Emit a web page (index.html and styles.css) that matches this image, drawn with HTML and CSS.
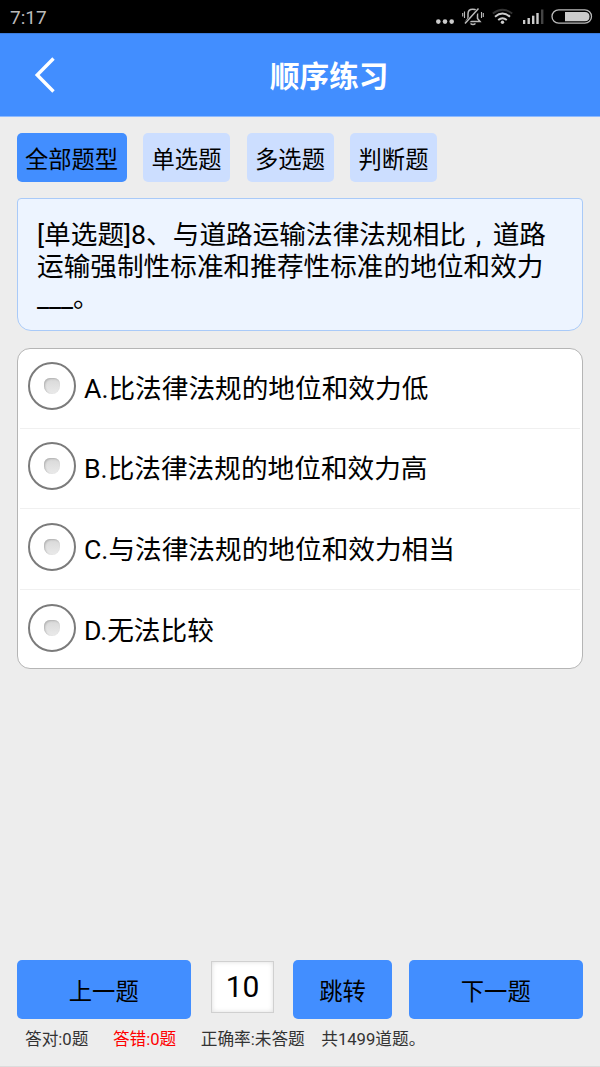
FILE: index.html
```html
<!DOCTYPE html>
<html lang="zh-CN">
<head>
  <meta charset="UTF-8" />
  <title>顺序练习</title>
  <link rel="stylesheet" href="styles.css">
</head>
<body>
  <div class="status-bar">
    <span class="time">7:17</span>
    <svg class="status-icons" width="160" height="33" viewBox="0 0 160 33">
      <!-- more -->
      <g fill="#ccc">
        <circle cx="3.3" cy="21.6" r="2.3" />
        <circle cx="10" cy="21.6" r="2.3" />
        <circle cx="16.7" cy="21.6" r="2.3" />
      </g>
      <!-- silent bell -->
      <g fill="none" stroke="#bbb" stroke-width="1.5">
        <path d="M31 21.5 L33 18.5 V14 Q33 9.3 37.7 9.3 Q42.5 9.3 42.5 14 V18.5 L45 21.5 Z" />
        <path d="M29.5 11.5 V18 M46.5 12 V18 M27.7 13 V16.5 M48.3 13 V17" stroke-width="1.1" />
        <path d="M35.5 23.5 Q38 25.5 40.5 23.5" />
        <path d="M30.5 24 L44 9" stroke="#000" stroke-width="4" />
        <path d="M30 23.5 L43.5 8.5" />
      </g>
      <!-- wifi -->
      <g fill="none" stroke="#ccc" stroke-width="1.9">
        <path d="M57.8 13.5 Q67.5 6 77.2 13.5" stroke="#333" />
        <path d="M60 16.7 Q67.5 10.3 75 16.7" />
        <path d="M63.2 20 Q67.5 16.3 71.8 20" />
        <circle cx="67.5" cy="22.3" r="1.7" fill="#ccc" stroke="none" />
      </g>
      <!-- signal -->
      <g fill="#ccc">
        <rect x="88" y="20" width="2.3" height="4" />
        <rect x="92.5" y="18" width="2.4" height="6" />
        <rect x="97" y="15.7" width="2.4" height="8.3" />
        <rect x="101.3" y="13" width="2.4" height="11" />
        <rect x="106" y="9.5" width="2.4" height="14.5" fill="#444" />
      </g>
      <rect x="117" y="9.8" width="39.5" height="13.4" rx="6.7" fill="none" stroke="#bbb" stroke-width="1.3" />
      <path d="M130 12 H150 Q154.5 12 154.5 16.5 Q154.5 21.3 150 21.3 H130 Z" fill="#ccc" />
    </svg>
  </div>

  <header>
    <svg class="back" width="24" height="40" viewBox="0 0 24 40">
      <path d="M19.5 3.5 L3.2 20 L19.5 36.5" fill="none" stroke="#fff" stroke-width="3.4" />
    </svg>
    <h1>顺序练习</h1>
  </header>

  <nav class="tabs">
    <button class="tab active">全部题型</button>
    <button class="tab">单选题</button>
    <button class="tab">多选题</button>
    <button class="tab">判断题</button>
  </nav>

  <div class="question">[单选题]8、与道路运输法律法规相比<span class="comma">,</span>道路<br>运输强制性标准和推荐性标准的地位和效力<br>___。</div>

  <div class="options">
    <div class="option"><span class="radio"></span>A.比法律法规的地位和效力低</div>
    <div class="option"><span class="radio"></span>B.比法律法规的地位和效力高</div>
    <div class="option"><span class="radio"></span>C.与法律法规的地位和效力相当</div>
    <div class="option"><span class="radio"></span>D.无法比较</div>
  </div>

  <footer>
    <div class="controls">
      <button class="btn step">上一题</button>
      <input type="text" class="page" value="10" />
      <button class="btn jump">跳转</button>
      <button class="btn step">下一题</button>
    </div>
    <div class="stats">
      <span class="right">答对:0题</span>
      <span class="wrong">答错:0题</span>
      <span class="rate">正确率:未答题</span>
      <span>共1499道题。</span>
    </div>
  </footer>
</body>
</html>
```
FILE: styles.css
```css
* {
  box-sizing: border-box;
}
body {
  font-family: Roboto, "Noto Sans CJK SC", sans-serif;
  background: #ededed;
  color: #000;
  margin: 0;
  height: 1067px;
  display: flex;
  flex-direction: column;
  overflow: hidden;
}
.status-bar {
  background: #000;
  height: 33px;
  display: flex;
  justify-content: space-between;
  padding: 0 5px 0 10px;
}
.time {
  color: #bbb;
  font-size: 19px;
  line-height: 35px;
}
header {
  background: #428eff;
  height: 84px;
  display: flex;
  align-items: center;
  border-top: 1px solid #3a7bdc;
  border-bottom: 1px solid #8dbaff;
}
.back {
  margin-left: 34px;
}
h1 {
  flex: 1;
  margin: 3px 0 0 212px;
  font-size: 29.6px;
  line-height: 40px;
  font-weight: 700;
  color: #fff;
}
button {
  font-family: inherit;
  font-size: 23.3px;
  border: none;
  padding: 0;
  color: #000;
  border-radius: 5px;
}
.tabs {
  display: flex;
  gap: 16.5px;
  margin: 16px 0 0 16.5px;
}
.tab {
  width: 87px;
  height: 49px;
  background: #ccdeff;
}
.tab.active {
  width: 110px;
  background: #428eff;
}
.question {
  margin: 16px 17px 0;
  height: 133px;
  padding: 21px 19px;
  background: #edf4ff;
  border: 1.5px solid #a9caf8;
  border-radius: 4px 4px 14px 14px;
  font-size: 26.67px;
  line-height: 31.7px;
  white-space: nowrap;
}
.comma {
  display: inline-block;
  width: 26.67px;
  text-indent: 10px;
}
.options {
  margin: 17px 17px 0;
  height: 321px;
  background: #fff;
  border: 1px solid #b5b5b5;
  border-radius: 13px;
}
.option {
  height: 80.5px;
  margin: 0 2px;
  padding: 0 0 3px 8px;
  display: flex;
  align-items: center;
  font-size: 26.67px;
  border-bottom: 1px solid #f0f0f0;
}
.option:first-child {
  height: 79.5px;
}
.option:last-child {
  height: 77.5px;
  border-bottom: none;
  padding-bottom: 0;
}
.radio {
  width: 48px;
  height: 48px;
  margin: 0 8px 1px 0;
  border: 2px solid #7b7b7b;
  border-radius: 50%;
  display: flex;
  align-items: center;
  justify-content: center;
}
.radio::before {
  content: "";
  width: 16px;
  height: 16px;
  border-radius: 6px 6px 8px 8px;
  background: linear-gradient(#d8d8d8, #eaeaea);
  box-shadow: inset 1px 1px 2px #b0b0b0;
}
footer {
  margin-top: auto;
  height: 107px;
  border-bottom: 1px solid #dcdcdc;
}
.controls {
  display: flex;
  padding: 0 16.5px;
}
.btn {
  height: 59px;
  background: #428eff;
  border-radius: 5px;
}
.step {
  width: 174.5px;
}
.jump {
  width: 99px;
  margin-right: 16.5px;
}
.page {
  width: 63px;
  height: 52px;
  margin: 1px 19px 0 20px;
  padding: 0 0 2px;
  border: 1px solid #d0d0d0;
  border-radius: 0;
  background: #fff;
  box-shadow: inset 0 0 5px #ddd;
  font-family: inherit;
  font-size: 30px;
  text-align: center;
}
.stats {
  display: flex;
  padding-left: 25px;
  margin-top: 9px;
  font-size: 16.67px;
  line-height: 24px;
  color: #333;
}
.right {
  margin-right: 24.5px;
}
.wrong {
  color: #f00;
  margin-right: 24.5px;
}
.rate {
  margin-right: 16.5px;
}
```
